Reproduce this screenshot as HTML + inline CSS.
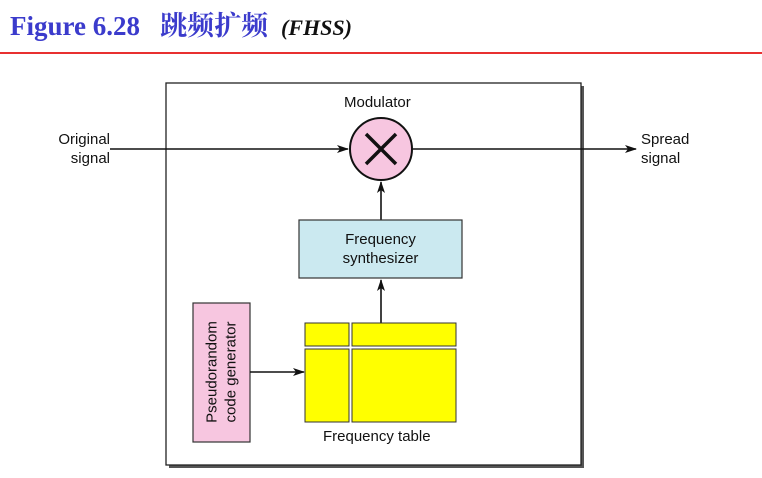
<!DOCTYPE html>
<html><head><style>
body{margin:0;width:762px;height:478px;background:#fff;position:relative;overflow:hidden;font-family:"Liberation Sans",sans-serif}
.t{position:absolute;left:10px;top:4px;font-family:"Liberation Serif","Noto Serif CJK SC",serif;font-weight:bold;font-size:27px;color:#3b3bcc;white-space:nowrap}
.t i{color:#111;font-size:22px;margin-left:6px}
.lab{position:absolute;font-size:15px;color:#111;line-height:19px}
</style></head><body>
<div class="t">Figure 6.28&nbsp;&nbsp; <span style="font-family:'Noto Serif CJK SC',serif">跳频扩频</span> <i>(FHSS)</i></div>
<div style="position:absolute;left:0;top:52px;width:762px;height:2px;background:#e83030"></div>
<svg width="762" height="478" style="position:absolute;left:0;top:0">
<defs><marker id="a" markerWidth="12" markerHeight="8" refX="11" refY="4" orient="auto" markerUnits="userSpaceOnUse"><path d="M0,0 L12,4 L0,8 L3,4z" fill="#111"/></marker></defs>
<rect x="169" y="86" width="415" height="382" fill="#555"/>
<rect x="166" y="83" width="415" height="382" fill="#fff" stroke="#222" stroke-width="1.3"/>
<line x1="110" y1="149" x2="348" y2="149" stroke="#111" stroke-width="1.6" marker-end="url(#a)"/>
<line x1="413" y1="149" x2="636" y2="149" stroke="#111" stroke-width="1.6" marker-end="url(#a)"/>
<circle cx="381" cy="149" r="31" fill="#f7c6e0" stroke="#111" stroke-width="2"/>
<path d="M366,134 L396,164 M396,134 L366,164" stroke="#111" stroke-width="3.5"/>
<line x1="381" y1="220" x2="381" y2="182" stroke="#111" stroke-width="1.6" marker-end="url(#a)"/>
<rect x="299" y="220" width="163" height="58" fill="#cbe9f0" stroke="#333" stroke-width="1.2"/>
<line x1="381" y1="323" x2="381" y2="280" stroke="#111" stroke-width="1.6" marker-end="url(#a)"/>
<rect x="193" y="303" width="57" height="139" fill="#f7c6e0" stroke="#333" stroke-width="1.2"/>
<line x1="250" y1="372" x2="304" y2="372" stroke="#111" stroke-width="1.6" marker-end="url(#a)"/>
<g fill="#ffff00" stroke="#333" stroke-width="1">
<rect x="305" y="323" width="44" height="23"/><rect x="352" y="323" width="104" height="23"/>
<rect x="305" y="349" width="44" height="73"/><rect x="352" y="349" width="104" height="73"/>
</g>
</svg>
<div class="lab" style="left:344px;top:93px">Modulator</div>
<div class="lab" style="left:40px;top:130px;text-align:right;width:70px">Original<br>signal</div>
<div class="lab" style="left:641px;top:130px">Spread<br>signal</div>
<div class="lab" style="left:299px;top:230px;width:163px;text-align:center">Frequency<br>synthesizer</div>
<div class="lab" style="left:323px;top:427px">Frequency table</div>
<div class="lab" style="left:147px;top:353px;width:149px;text-align:center;transform:rotate(-90deg);transform-origin:center;height:38px">Pseudorandom<br>code generator</div>
</body></html>
